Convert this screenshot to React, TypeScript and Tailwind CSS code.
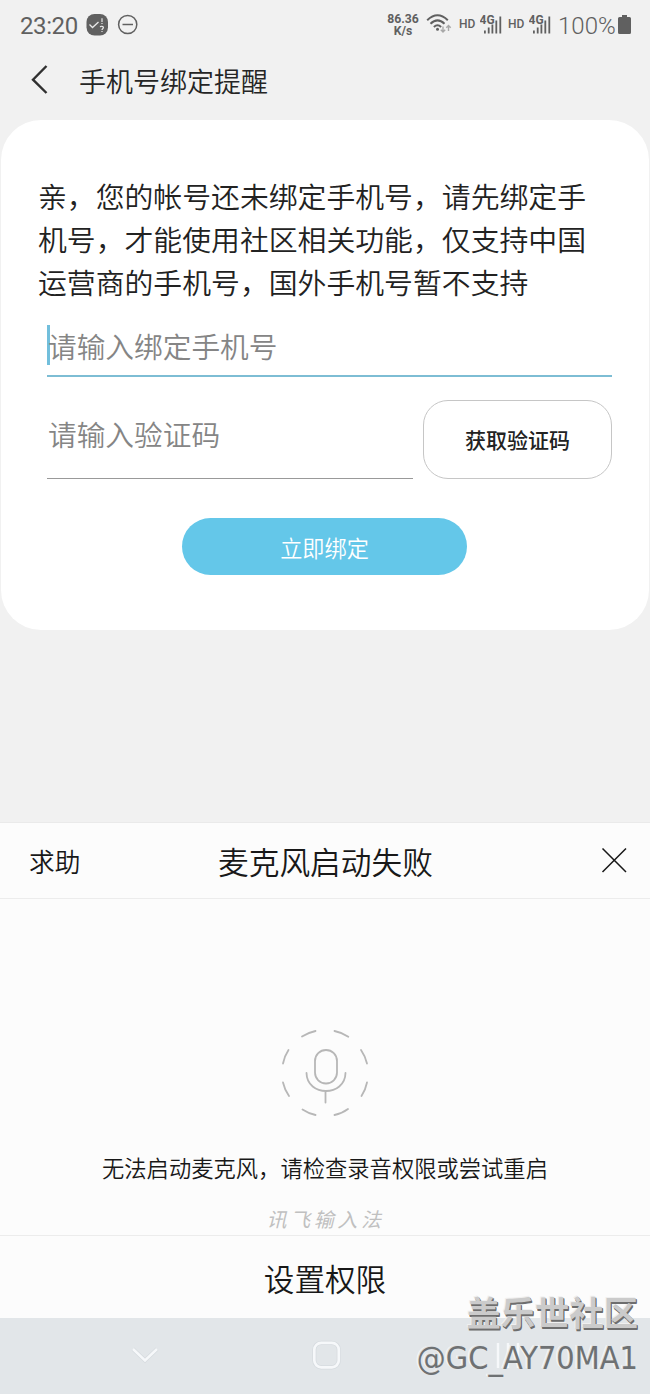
import React from "react";

const cjk = "font-['Noto_Sans_CJK_SC',sans-serif]";

function SignalIcon() {
  return (
    <svg className="block h-[22px] w-[23px] shrink-0" viewBox="0 -2 23 22" fill="#606060">
      <text x="-0.5" y="8.6" fontSize="12" fontWeight="700" fontFamily="Roboto, sans-serif">
        4G
      </text>
      <rect x="4" y="15.5" width="1.8" height="3" />
      <rect x="7.8" y="12.5" width="1.8" height="6" />
      <rect x="11.5" y="9.5" width="1.8" height="9" />
      <rect x="15.4" y="5.5" width="1.8" height="13" />
      <rect x="19.4" y="1.5" width="1.8" height="17" />
    </svg>
  );
}

function StatusBar() {
  return (
    <header className="flex h-[52px] items-start pl-5 pr-[19px] text-[#606060] font-[Roboto,sans-serif]">
      <span className="mt-[9px] text-[24px] font-normal leading-[34px] tracking-[-0.4px] w-[66px]">23:20</span>
      <svg className="mt-[14px] block h-[22px] w-[22px]" viewBox="0 0 22 22" fill="none">
        <rect x="0.5" y="0" width="21.5" height="21.5" rx="8" fill="#606060" />
        <path d="M3.5 10.5 L6.5 13.5 L12.5 8" stroke="#e8e8e8" strokeWidth="1.3" />
        <path d="M16 4.2 V8 M16 9 V10 M14.2 13.2 C14.5 11.8 17.6 12 17.4 13.7 C17.2 14.9 16 14.7 16 16 M16 17 V18" stroke="#e8e8e8" strokeWidth="1.2" />
      </svg>
      <svg className="ml-[9px] mt-[14px] block h-[22px] w-[22px]" viewBox="0 0 22 22" fill="none" stroke="#606060" strokeWidth="1.5">
        <circle cx="10.7" cy="10.5" r="9.1" />
        <path d="M5.5 10.5 H16" />
      </svg>
      <div className="ml-auto flex items-start">
        <div className="mt-[13px] w-[34px] text-center text-[12.2px] font-bold leading-[12px]">
          <div>86.36</div>
          <div>K/s</div>
        </div>
        <svg className="ml-[6px] mt-[14px] block h-[20px] w-[28px]" viewBox="0 0 28 20" fill="none" stroke="#606060" strokeWidth="2">
          <path d="M1.2 6.2 Q11.5 -3.8 21.8 6.2" />
          <path d="M4.5 9.8 Q11.5 3 18.5 9.8" />
          <path d="M7.9 13 Q11.5 9.5 15.1 13" />
          <circle cx="11.5" cy="15.2" r="1.5" fill="#606060" stroke="none" />
          <path d="M17 12.5 V18 M14.8 15.7 L17 18 L19.2 15.7" stroke="#a8a8a8" strokeWidth="1.4" />
          <path d="M22.5 17 V11.5 M20.3 13.8 L22.5 11.5 L24.7 13.8" stroke="#a8a8a8" strokeWidth="1.4" />
        </svg>
        <span className="ml-[5px] mt-[17px] w-[21px] text-[12px] font-medium leading-[14px]">HD</span>
        <div className="mt-[13px]"><SignalIcon /></div>
        <span className="ml-[5px] mt-[17px] w-[21px] text-[12px] font-medium leading-[14px]">HD</span>
        <div className="mt-[13px]"><SignalIcon /></div>
        <span className="ml-[6px] mt-[9px] w-[60px] whitespace-nowrap text-[24px] font-[350] leading-[34px]">100%</span>
        <svg className="mt-[15px] block h-[20px] w-[13px]" viewBox="0 0 13 20" fill="#606060">
          <path d="M4 0 H9 V2 H11.5 Q13 2 13 3.5 V17.5 Q13 19 11.5 19 H1.5 Q0 19 0 17.5 V3.5 Q0 2 1.5 2 H4 Z" />
        </svg>
      </div>
    </header>
  );
}

function BindingCard() {
  return (
    <main className="mx-px h-[510px] rounded-[40px] bg-white pl-[37px] pr-[37px] pt-[54px]">
      <p className="whitespace-nowrap text-[28.85px] leading-[43.2px] text-[#222]">
        亲，您的帐号还未绑定手机号，请先绑定手
        <br />
        机号，才能使用社区相关功能，仅支持中国
        <br />
        运营商的手机号，国外手机号暂不支持
      </p>
      <div className="ml-[9px] mt-[20.4px] flex h-[53px] items-start border-b-2 border-[#7dbdd4]">
        <div className="mt-[1px] h-[40px] w-[3px] bg-[#72bfdc]" />
        <span className="-ml-[2px] text-[28.7px] leading-[43px] text-[#858585]">请输入绑定手机号</span>
      </div>
      <div className="ml-[9px] mt-[23px] flex h-[80px] gap-[10px]">
        <div className="h-[79px] w-[366px] border-b border-[#999] pl-px pt-[12px] text-[28.7px] leading-[43px] text-[#858585]">
          请输入验证码
        </div>
        <button className="h-[79px] w-[189px] shrink-0 rounded-[25px] border border-[#c6c6c6] text-[21px] font-medium text-[#222]">
          获取验证码
        </button>
      </div>
      <button className="ml-[144px] mt-[38px] block h-[57px] w-[285px] rounded-full bg-[#64c7e9] pt-px text-[22.2px] leading-[32px] text-white">
        立即绑定
      </button>
    </main>
  );
}

function MicIcon() {
  return (
    <svg className="block h-[90px] w-[90px]" viewBox="-45 -45 90 90" fill="none" stroke="#b7b7b7" strokeWidth="1.8" strokeLinecap="round">
      <path d="M-23 -36.5 Q-16.5 -40.5 -9.5 -42 M9.5 -42 Q17 -40.5 23.3 -36.3 M36 -23 Q40.5 -16.5 42 -9.5 M42 9.5 Q40.5 17 36.5 23 M23 36 Q17 40.5 9.5 42 M-9.5 42 Q-16.5 40.5 -22.5 36.5 M-36 23 Q-40.5 16.5 -42 9.5 M-42 -9.5 Q-40.5 -17 -36.5 -23" />
      <rect x="-10" y="-23" width="22" height="33.5" rx="11" />
      <path d="M-18.5 0 C-18 24 20 24 20.5 0 M0.5 18.5 V29.5" />
    </svg>
  );
}

function VoicePanel() {
  return (
    <section className="h-[496px] border-t border-[#eaeaea] bg-[#fcfcfc] text-[#181818]">
      <div className="flex h-[76px] items-center border-b border-[#ececec] pl-[29px] pr-[23px]">
        <span className="w-[189px] text-[25.7px] leading-[38px]">求助</span>
        <h2 className="whitespace-nowrap text-[30.7px] font-[350] leading-[46px]">麦克风启动失败</h2>
        <svg className="ml-auto block h-[26px] w-[26px]" viewBox="0 0 26 26" fill="none" stroke="#181818" strokeWidth="1.5">
          <path d="M1.5 0.5 L25 24 M25 0.5 L1.5 24" />
        </svg>
      </div>
      <div className="flex h-[337px] flex-col items-center border-b border-[#ececec] pt-[129px]">
        <MicIcon />
        <p className="mt-[32px] whitespace-nowrap text-[22.3px] leading-[34px]">无法启动麦克风，请检查录音权限或尝试重启</p>
        <p className="mt-[21px] h-[28px] whitespace-nowrap pl-[1px] text-[20px] italic font-normal leading-[28px] tracking-[3.6px] text-[#c0c0c0]">讯飞输入法</p>
      </div>
      <button className="flex h-[82px] w-full items-center justify-center pb-px pt-[2px] text-[30.6px] leading-[46px]">设置权限</button>
    </section>
  );
}

function NavigationBar() {
  return (
    <nav className="flex h-[76px] items-start bg-[#e2e6e9]">
      <svg className="ml-[131px] mt-[28px] block h-[18px] w-[28px]" viewBox="0 0 28 18" fill="none">
        <path d="M2 3 L14 14.5 L26 3" stroke="#d6dbdf" strokeWidth="4" />
        <path d="M2 3 L14 14.5 L26 3" stroke="#f6f8fa" strokeWidth="2.5" />
      </svg>
      <svg className="ml-[153px] mt-[22px] block h-[30px] w-[30px]" viewBox="0 0 30 30" fill="none">
        <rect x="2.3" y="2.8" width="24.5" height="24.5" rx="7" stroke="#d6dbdf" strokeWidth="4.2" />
        <rect x="2.3" y="2.8" width="24.5" height="24.5" rx="7" stroke="#f6f8fa" strokeWidth="2.7" />
      </svg>
      <svg className="ml-[154px] mt-[24px] block h-[28px] w-[26px]" viewBox="0 0 26 28" stroke="#f6f8fa" strokeWidth="2.4">
        <path d="M2 1 V26 M12 1 V26 M22 1 V26" />
      </svg>
    </nav>
  );
}

export default function App() {
  return (
    <div className={`relative h-[1394px] w-[650px] overflow-hidden bg-[#f1f1f1] font-[350] ${cjk}`}>
      <StatusBar />
      <div className="flex h-[68px] items-start text-[#252525]">
        <svg className="ml-[31px] mt-[13px] block h-[30px] w-[18px]" viewBox="0 0 18 30" fill="none" stroke="#303030" strokeWidth="2.4">
          <path d="M15.5 1 L2 14.7 L15.5 28" />
        </svg>
        <h1 className="ml-[30px] mt-[9px] text-[27px] font-[350] leading-[40px]">手机号绑定提醒</h1>
      </div>
      <BindingCard />
      <div className="h-[192px]" />
      <VoicePanel />
      <NavigationBar />
      <div className="absolute right-[12px] top-[1288px] text-right">
        <div className="whitespace-nowrap text-[34.3px] font-bold leading-[46px] text-[#cbcbcb] [text-shadow:1px_1px_0_#6e6e6e,1px_2px_0_#6e6e6e,-1px_-1px_0_#f0f0f0]">
          盖乐世社区
        </div>
        <div className="mt-px whitespace-nowrap font-['DejaVu_Sans_Condensed','DejaVu_Sans',sans-serif] text-[32.2px] font-normal leading-[46px] text-[#6e7173] [text-shadow:-1px_-1px_0_#dfe2e4,-2px_-1px_0_#f8f9fa]">
          @GC_AY70MA1
        </div>
      </div>
    </div>
  );
}
